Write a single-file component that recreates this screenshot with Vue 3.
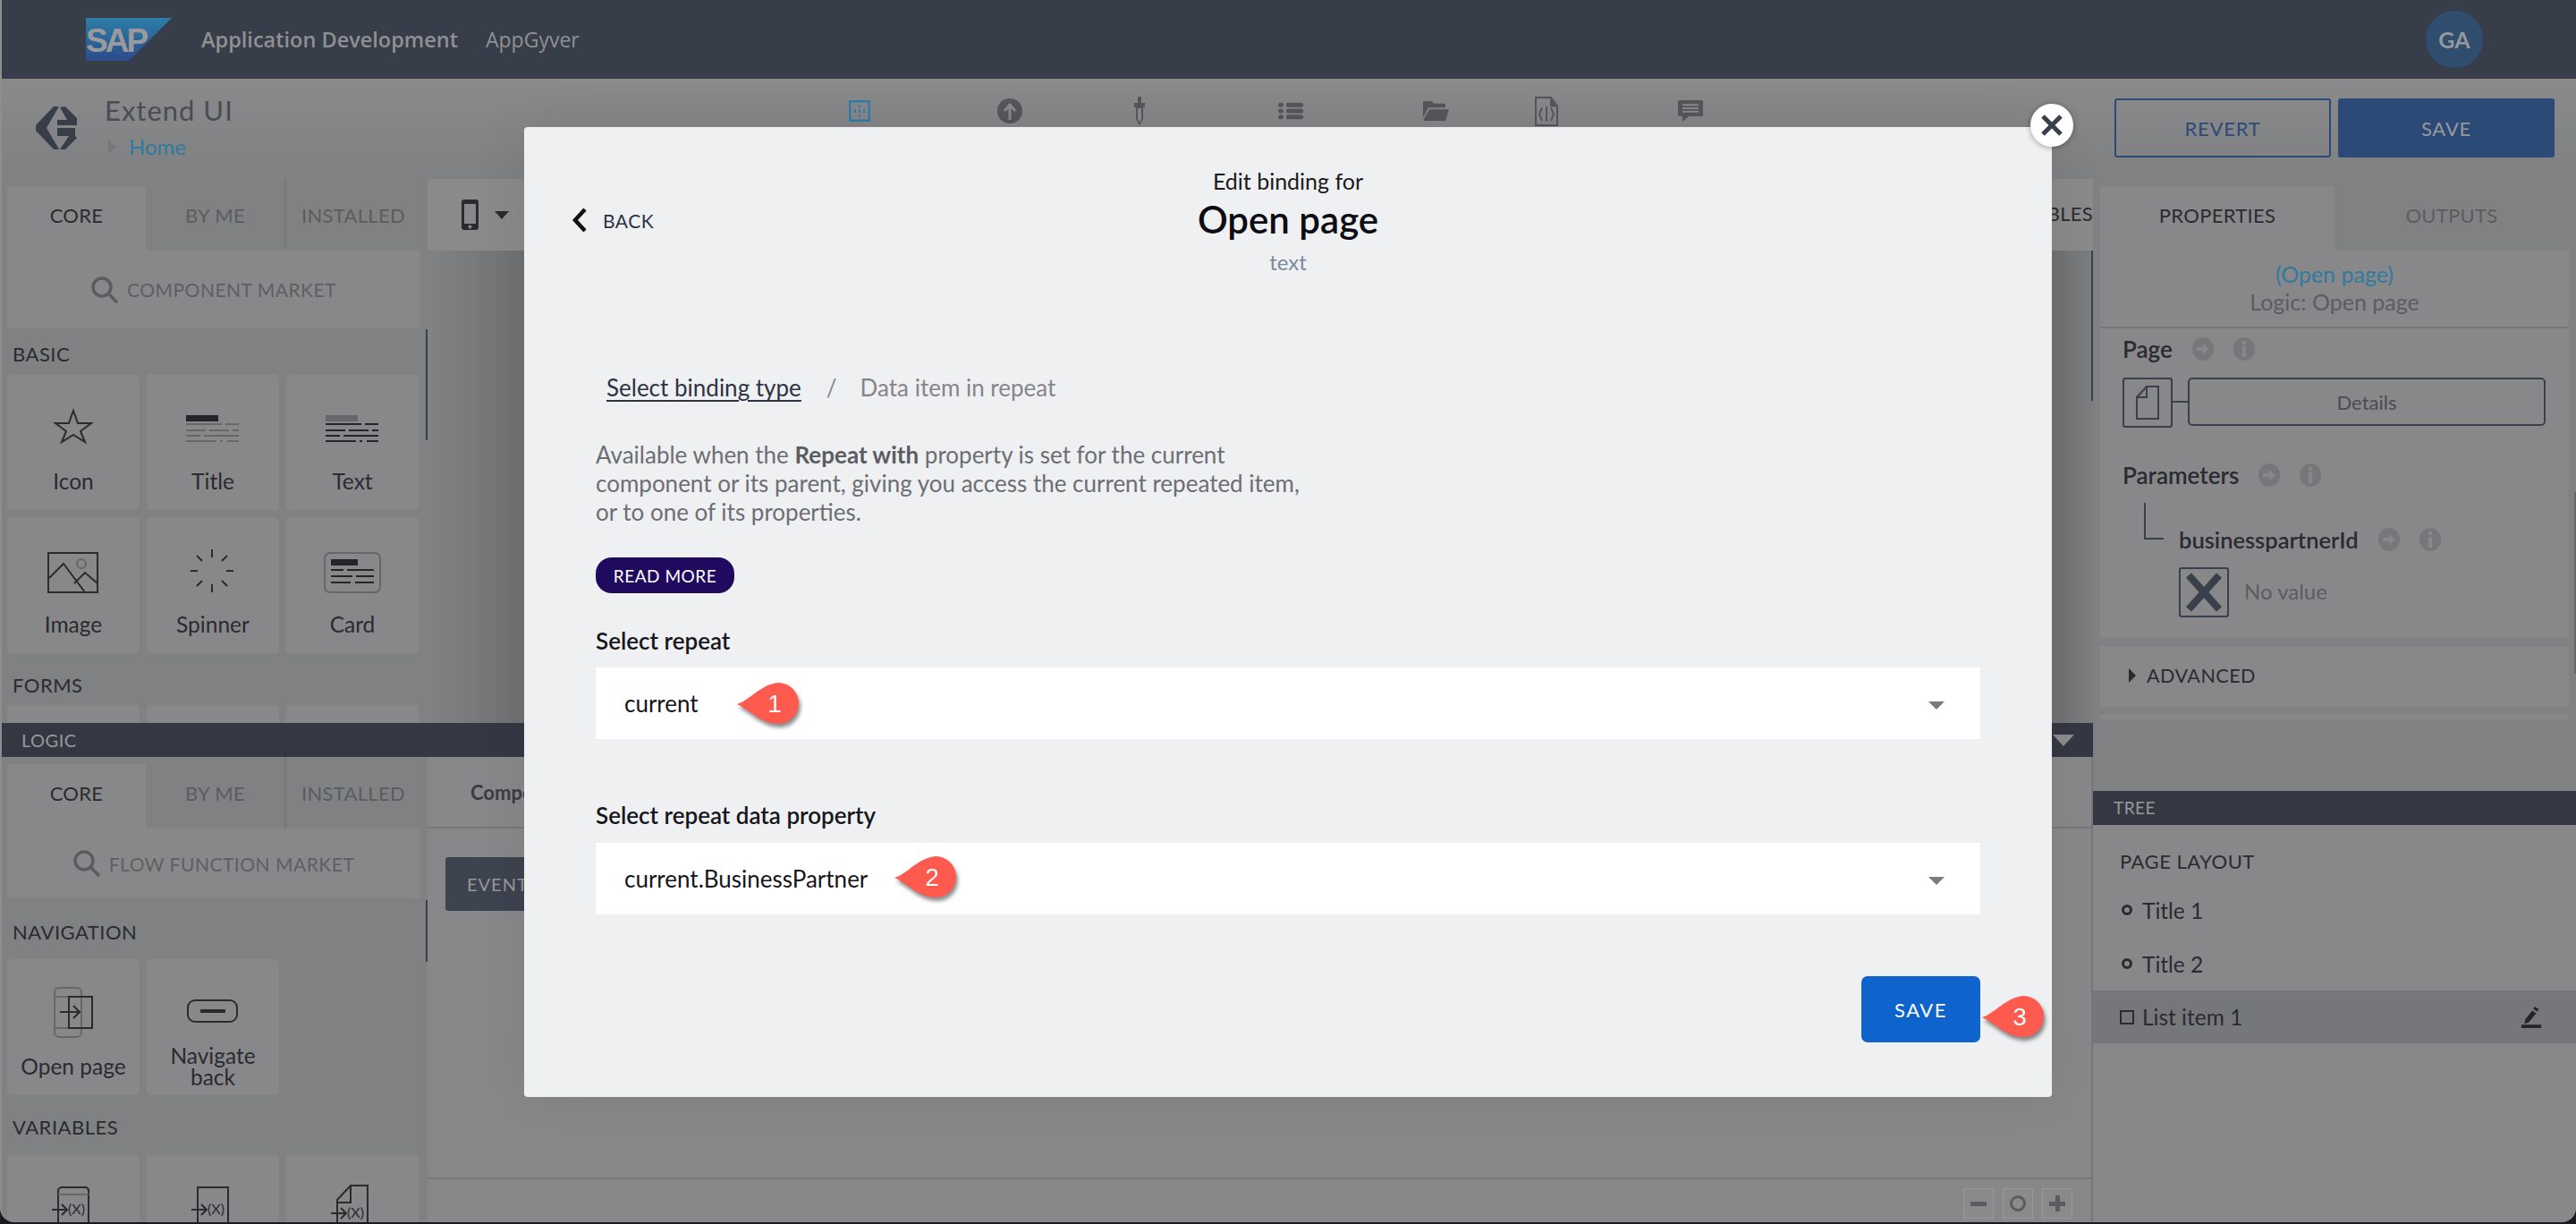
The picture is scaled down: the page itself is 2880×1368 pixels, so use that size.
<template>
  <div class="page">
    <div class="window">
      <header class="topbar">
        <svg class="sap" width="96" height="48" viewBox="0 0 96 48">
          <defs>
            <linearGradient id="sapfill" x1="0" y1="0" x2="0" y2="1">
              <stop offset="0" stop-color="#2c7ea6" />
              <stop offset="1" stop-color="#2b4c8c" />
            </linearGradient>
          </defs>
          <polygon points="0,0 96,0 48,48 0,48" fill="url(#sapfill)" />
          <text x="0" y="38" class="sap-text">SAP</text>
        </svg>
        <span class="top-title">Application Development</span>
        <span class="top-link">AppGyver</span>
        <div class="avatar">GA</div>
      </header>

      <div class="appbar">
        <svg class="logo" width="46" height="48" viewBox="0 0 46 48" fill="#383d4a">
          <path d="M20 0h6L12 24l14 24h-6L0 27v-6z" />
          <path d="M27 1l6-1 13 13v2H35zM24 15h22v6H24zM24 24h20v9H24zM46 35L33 48h-6l10-15h7z" />
        </svg>
        <div class="project">
          <div class="project-name">Extend UI</div>
          <div class="crumb"><i class="crumb-arrow"></i><span>Home</span></div>
        </div>
        <nav class="nav-icons">
          <svg width="24" height="24" viewBox="0 0 24 24"><rect x="1" y="1" width="22" height="22" fill="none" stroke="#2f7ea6" stroke-width="3" /><path d="M12 5v3M12 10v4M12 16v3M7 10v4M17 10v4" stroke="#2f7ea6" stroke-width="2" /></svg>
          <svg width="28" height="28" viewBox="0 0 28 28"><circle cx="14" cy="14" r="14" fill="#55565c" /><path d="M14 24V10M8 14l6-7 6 7" fill="none" stroke="#8a8a8b" stroke-width="3" /></svg>
          <svg width="16" height="32" viewBox="0 0 16 32"><path d="M6 0h4v7h4v5h-2v13l-4 7-4-7V12H2V7h4z" fill="#55565c" /><path d="M6 13h4v12l-2 4-2-4z" fill="#8a8a8b" /></svg>
          <svg width="28" height="20" viewBox="0 0 28 24" preserveAspectRatio="none" fill="#55565c"><circle cx="3" cy="4" r="3" /><circle cx="3" cy="12" r="3" /><circle cx="3" cy="20" r="3" /><rect x="9" y="1" width="19" height="6" rx="2" /><rect x="9" y="9" width="19" height="6" rx="2" /><rect x="9" y="17" width="19" height="6" rx="2" /></svg>
          <svg width="29" height="22" viewBox="0 0 29 24" preserveAspectRatio="none" fill="#55565c"><path d="M0 0h10l2 3h13v5H6L0 20z" /><path d="M7 10h22l-4 14H0z" /></svg>
          <svg width="28" height="33" viewBox="0 0 28 32" preserveAspectRatio="none" fill="none" stroke="#55565c" stroke-width="2"><path d="M2 1h17l7 9v21H2z" /><path d="M19 1v9h7" fill="#55565c" /><path d="M9 12l-3 7 3 7M19 12l3 7-3 7M14 11v16" /></svg>
          <svg width="28" height="24" viewBox="0 0 28 32" preserveAspectRatio="none"><path d="M2 0h24a2 2 0 0 1 2 2v20a2 2 0 0 1-2 2H12l-7 8v-8H2a2 2 0 0 1-2-2V2a2 2 0 0 1 2-2z" fill="#55565c" /><path d="M5 7h18M5 12h18M5 17h18" stroke="#8a8a8b" stroke-width="2.5" /></svg>
        </nav>
        <div class="app-actions">
          <button class="btn-outline">REVERT</button>
          <button class="btn-fill">SAVE</button>
        </div>
      </div>

      <div class="workspace">
        <div class="main">
          <aside class="palette palette-top">
            <div class="tabs">
              <div class="tab active">CORE</div>
              <div class="tab">BY ME</div>
              <div class="tab sep">INSTALLED</div>
            </div>
            <div class="market">
              <svg width="30" height="30" viewBox="0 0 30 30" fill="none" stroke="#5b5c62" stroke-width="3.500"><circle cx="12" cy="12" r="10" /><path d="M19 19l10 10" /></svg>
              <span>COMPONENT MARKET</span>
            </div>
            <div class="scroll-mark mark-a"></div>
            <div class="group-title first">BASIC</div>
            <div class="tiles">
              <div v-for="t in basic" :key="t.name" class="tile">
                <svg width="148" height="96" viewBox="0 0 148 96" v-html="t.icon"></svg>
                <div class="tile-label">{{ t.name }}</div>
              </div>
            </div>
            <div class="group-title forms">FORMS</div>
            <div class="tiles">
              <div class="tile"></div>
              <div class="tile"></div>
              <div class="tile"></div>
            </div>
          </aside>

          <div class="canvas">
            <div class="canvas-tools">
              <svg width="20" height="34" viewBox="0 0 20 34"><rect width="19" height="34" rx="3" fill="#2a2b30" /><rect x="3" y="5" width="13" height="22" fill="#88888a" /><circle cx="9.500" cy="30.500" r="2" fill="#88888a" /></svg>
              <i class="tool-caret"></i>
              <span class="tool-vars">VARIABLES</span>
            </div>
            <div class="canvas-stage"><i class="stage-scroll"></i></div>
          </div>

          <div class="logic-bar">
            <span>LOGIC</span>
            <i class="logic-caret"></i>
          </div>

          <aside class="palette palette-bottom">
            <div class="tabs">
              <div class="tab active">CORE</div>
              <div class="tab">BY ME</div>
              <div class="tab sep">INSTALLED</div>
            </div>
            <div class="market market-flow">
              <svg width="30" height="30" viewBox="0 0 30 30" fill="none" stroke="#5b5c62" stroke-width="3.500"><circle cx="12" cy="12" r="10" /><path d="M19 19l10 10" /></svg>
              <span>FLOW FUNCTION MARKET</span>
            </div>
            <div class="scroll-mark mark-b"></div>
            <div class="group-title nav-title">NAVIGATION</div>
            <div class="tiles">
              <div v-for="t in navigation" :key="t.name" class="tile">
                <svg width="148" height="96" viewBox="0 0 148 96" v-html="t.icon"></svg>
                <div class="tile-label">{{ t.name }}</div>
              </div>
            </div>
            <div class="group-title var-title">VARIABLES</div>
            <div class="tiles">
              <div v-for="(icon, i) in variables" :key="i" class="tile">
                <svg width="148" height="76" viewBox="0 0 148 76" v-html="icon"></svg>
              </div>
            </div>
          </aside>

          <div class="flow-area">
            <div class="flow-tabs"><b>Component</b></div>
            <div class="flow-canvas"><div class="event-btn">EVENTS</div></div>
            <div class="zoom-bar">
              <span class="zoom-btn"><i class="z-minus"></i></span>
              <span class="zoom-btn"><i class="z-ring"></i></span>
              <span class="zoom-btn"><i class="z-minus"></i><i class="z-plus"></i></span>
            </div>
          </div>
        </div>

        <aside class="side">
          <div class="side-top">
            <div class="tabs side-tabs">
              <div class="tab active">PROPERTIES</div>
              <div class="tab">OUTPUTS</div>
            </div>
            <div class="card summary">
              <a>(Open page)</a>
              <span>Logic: Open page</span>
            </div>
            <div class="card props">
              <div class="prop-head">Page<i class="hint arrow"></i><i class="hint info"></i></div>
              <div class="page-row">
                <div class="icon-box">
                  <svg width="26" height="38" viewBox="0 0 26 38" fill="none" stroke="#3a3f4c" stroke-width="2"><path d="M12 1h13v36H1V13z" /><path d="M12 1v12H1" /></svg>
                </div>
                <i class="link-line"></i>
                <div class="details">Details</div>
              </div>
              <div class="prop-head params">Parameters<i class="hint arrow"></i><i class="hint info"></i></div>
              <div class="param">
                <i class="tree-line"></i>
                <div class="param-body">
                  <div class="prop-head sub">businesspartnerId<i class="hint arrow"></i><i class="hint info"></i></div>
                  <div class="no-value">
                    <div class="icon-box x-box">
                      <svg width="40" height="44" viewBox="0 0 40 44" fill="none" stroke="#3a3f4c" stroke-width="8"><path d="M3 3l34 38M37 3L3 41" /></svg>
                    </div>
                    <span>No value</span>
                  </div>
                </div>
              </div>
            </div>
            <div class="card advanced"><i class="adv-arrow"></i>ADVANCED</div>
            <div class="card sliver"></div>
            <i class="side-scroll"></i>
          </div>
          <div class="tree-bar">TREE</div>
          <div class="tree">
            <div class="tree-title">PAGE LAYOUT</div>
            <div class="tree-item"><i class="dot"></i>Title 1</div>
            <div class="tree-item"><i class="dot"></i>Title 2</div>
            <div class="tree-item selected">
              <i class="square"></i>List item 1
              <svg class="pen" width="24" height="24" viewBox="0 0 24 26" fill="#24252a"><path d="M16 0l5 3-1.500 3-5-3zM13 5l5 3-9 11-5 2 .5-5zM0 22h24v4H0z" /></svg>
            </div>
          </div>
        </aside>
      </div>
    </div>

    <div class="modal">
      <button class="close">
        <svg width="24" height="24" viewBox="0 0 24 24" fill="none" stroke="#3a3f4c" stroke-width="5"><path d="M2 2l20 20M22 2L2 22" /></svg>
      </button>
      <header class="modal-head">
        <div class="back">
          <svg width="18" height="28" viewBox="0 0 18 28" fill="none" stroke="#111" stroke-width="4.500"><path d="M15 2L4 14l11 12" /></svg>
          <span>BACK</span>
        </div>
        <div class="heading">
          <div class="h-sub">Edit binding for</div>
          <div class="h-main">Open page</div>
          <div class="h-type">text</div>
        </div>
      </header>
      <div class="modal-body">
        <div class="steps">
          <a>Select binding type</a>
          <span class="slash">/</span>
          <span class="step-now">Data item in repeat</span>
        </div>
        <p class="desc">Available when the <b>Repeat with</b> property is set for the current<br />component or its parent, giving you access the current repeated item,<br />or to one of its properties.</p>
        <button class="read-more">READ MORE</button>
        <div class="field-label first-label">Select repeat</div>
        <div class="select">
          current
          <i class="select-caret"></i>
          <div class="marker m1">
            <svg width="70" height="50" viewBox="0 0 70 50"><path d="M0 24C14 20 26 2 46 0a23 23 0 0 1 0 46C26 46 14 30 0 24z" fill="#ff5a4e" /></svg>
            <span>1</span>
          </div>
        </div>
        <div class="field-label">Select repeat data property</div>
        <div class="select">
          current.BusinessPartner
          <i class="select-caret"></i>
          <div class="marker m2">
            <svg width="70" height="50" viewBox="0 0 70 50"><path d="M0 24C14 20 26 2 46 0a23 23 0 0 1 0 46C26 46 14 30 0 24z" fill="#ff5a4e" /></svg>
            <span>2</span>
          </div>
        </div>
        <div class="modal-foot"><button class="modal-save">SAVE</button></div>
      </div>
      <div class="marker m3">
        <svg width="70" height="50" viewBox="0 0 70 50"><path d="M0 24C14 20 26 2 46 0a23 23 0 0 1 0 46C26 46 14 30 0 24z" fill="#ff5a4e" /></svg>
        <span>3</span>
      </div>
    </div>
  </div>
</template>

<script setup>
const ink = 'stroke="#2a2b30" stroke-width="2" fill="none"'
const lines = (color) => `<path d="M44 56h40M88 56h15M44 63h22M70 63h22M96 63h7M44 69h16M64 69h39M44 75h34M82 75h3M90 75h13" stroke="${color}" stroke-width="2" />`

const basic = [
  { name: 'Icon', icon: `<polygon points="74,41 79,55 94,55 82,64 87,76 74,68 61,76 66,64 54,55 69,55" ${ink} />` },
  { name: 'Title', icon: `<rect x="44" y="46" width="36" height="7" fill="#24252a" />${lines('#66676b')}` },
  { name: 'Text', icon: `<rect x="44" y="46" width="36" height="7" fill="#66676b" />${lines('#24252a')}` },
  { name: 'Image', icon: `<rect x="46" y="40" width="55" height="44" ${ink} /><path d="M47 68l16-16 24 32M75 74l12-12 14 12" ${ink} /><circle cx="83" cy="52" r="5" fill="none" stroke="#66676b" stroke-width="2" />` },
  { name: 'Spinner', icon: `<path d="M73 36v9M73 75v9M49 60h8M89 60h8M56 43l6 6M84 71l6 6M90 43l-6 6M62 71l-6 6" ${ink} />` },
  { name: 'Card', icon: `<rect x="43" y="40" width="62" height="44" rx="6" fill="none" stroke="#66676b" stroke-width="2" /><rect x="50" y="47" width="30" height="7" fill="#24252a" /><path d="M50 59h14M68 59h30M50 66h24M78 66h20M50 73h22M77 73h21" stroke="#24252a" stroke-width="2" />` }
]

const navigation = [
  { name: 'Open page', icon: `<rect x="53" y="32" width="30" height="55" rx="5" fill="none" stroke="#66676b" stroke-width="2" /><path d="M53 42h15M53 77h15" stroke="#66676b" stroke-width="2" /><rect x="69" y="42" width="26" height="35" ${ink} /><path d="M59 59h21M74 52l7 7-7 7" ${ink} />` },
  { name: 'Navigate back', icon: `<rect x="46" y="46" width="55" height="24" rx="8" ${ink} /><path d="M60 58h28" stroke="#2a2b30" stroke-width="4" />` }
]

const varText = (y) => `<text x="68" y="${y}" font-family="Lato" font-size="16" fill="#2a2b30">(X)</text>`
const variables = [
  `<path d="M57 76V40a4 4 0 0 1 4-4h27a4 4 0 0 1 3 4v36" ${ink} /><path d="M57 44h34" stroke="#66676b" stroke-width="2" /><path d="M50 61h17M61 55l6 6-6 6" ${ink} />${varText(66)}`,
  `<path d="M57 76V36h34v40" ${ink} /><path d="M50 61h17M61 55l6 6-6 6" ${ink} />${varText(66)}`,
  `<path d="M57 76V50l15-16h19v42M72 34v19H57" ${ink} /><path d="M50 65h17M61 59l6 6-6 6" ${ink} />${varText(70)}`
]
</script>

<style>
html, body { margin: 0; background: #1c1a1e; }
</style>

<style scoped>
.page { position: relative; width: 2880px; height: 1368px; overflow: hidden; background: #1c1a1e; font-family: Lato, "Open Sans", sans-serif; color: #2a2b30; }
.window { width: 2880px; height: 1366px; box-sizing: border-box; border-left: 2px solid #8e8e8f; border-radius: 0 0 16px 16px; overflow: hidden; background: #808183; display: flex; flex-direction: column; }

.topbar { height: 88px; flex: none; background: #383d4a; display: flex; align-items: center; padding-left: 94px; padding-right: 104px; box-sizing: border-box; font-family: "Open Sans", sans-serif; color: #8f9092; }
.sap { flex: none; }
.sap-text { font-family: "Liberation Sans", sans-serif; font-weight: 700; font-size: 37px; letter-spacing: -3px; fill: #9a9a9c; }
.top-title { margin-left: 33px; font-size: 23.500px; font-weight: 600; }
.top-link { margin-left: 31px; font-size: 23px; }
.avatar { margin-left: auto; width: 64px; height: 64px; border-radius: 50%; background: #2f4d6f; color: #98989a; font: 700 25px Lato, sans-serif; display: flex; align-items: center; justify-content: center; }

.appbar { height: 112px; flex: none; position: relative; background: linear-gradient(#8a8a8b, #7f8082); display: flex; align-items: flex-start; }
.logo { margin: 31px 0 0 38px; }
.project { margin-left: 31px; padding-top: 16px; }
.project-name { font-size: 31px; line-height: 38px; color: #4a4c55; letter-spacing: 1px; }
.crumb { display: flex; align-items: center; font-size: 24px; line-height: 32px; color: #2f7aa0; margin-top: 6px; margin-left: 2px; }
.crumb-arrow { width: 0; height: 0; border: 8px solid transparent; border-left: 9px solid #76777c; border-right: 0; margin-right: 14px; margin-left: 2px; }
.nav-icons { position: absolute; left: 947px; top: 19px; height: 34px; display: flex; align-items: center; }
.nav-icons svg:nth-child(2) { margin-left: 142px; }
.nav-icons svg:nth-child(3) { margin-left: 123px; }
.nav-icons svg:nth-child(4) { margin-left: 147px; }
.nav-icons svg:nth-child(5) { margin-left: 134px; }
.nav-icons svg:nth-child(6) { margin-left: 95px; }
.nav-icons svg:nth-child(7) { margin-left: 133px; }
.app-actions { position: absolute; left: 2362px; top: 22px; display: flex; gap: 8px; }
.app-actions button { width: 242px; height: 66px; border-radius: 3px; font: 22px Lato, sans-serif; letter-spacing: .8px; box-sizing: border-box; }
.btn-outline { background: none; border: 2px solid #2c4a78; color: #2c4a78; }
.btn-fill { background: #2c4a78; border: 0; color: #98989a; }

.workspace { flex: 1; min-height: 0; display: flex; }
.main { width: 2338px; flex: none; display: grid; grid-template-columns: 476px 1fr; grid-template-rows: 608px 38px 1fr; }

.palette { position: relative; overflow: hidden; background: #808183; }
.palette-top { grid-column: 1; grid-row: 1; }
.palette-bottom { grid-column: 1; grid-row: 3; }
.tabs { height: 80px; display: flex; box-sizing: border-box; padding-left: 6px; }
.tab { flex: 0 0 155px; margin-top: 8px; font-size: 22px; color: #5b5c62; display: flex; align-items: center; justify-content: center; letter-spacing: .3px; padding-bottom: 8px; box-sizing: border-box; }
.tab.active { background: #88888a; border-radius: 4px 4px 0 0; color: #2a2b30; }
.tab.sep { flex: 0 0 158px; margin-top: 0; padding: 8px 6px 8px 0; border-left: 2px solid #76777a; }
.market { width: 462px; height: 87px; margin-left: 6px; background: #88888a; display: flex; align-items: center; justify-content: center; gap: 10px; font-size: 21px; color: #5e5f64; letter-spacing: .5px; }
.market-flow { height: 78px; }
.scroll-mark { position: absolute; right: 0; width: 2px; background: #3a3f4c; }
.mark-a { top: 168px; height: 124px; }
.mark-b { top: 160px; height: 69px; }
.group-title { font-size: 22px; line-height: 24px; padding-left: 12px; letter-spacing: .5px; }
.group-title.first { margin: 17px 0 10px; }
.group-title.forms { margin: 24px 0 10px; }
.group-title.nav-title { margin: 26px 0 18px; }
.group-title.var-title { margin: 24px 0 19px; }
.tiles { display: grid; grid-template-columns: repeat(3, 148px); column-gap: 8px; row-gap: 8px; padding-left: 6px; }
.tile { height: 152px; background: #88888a; border-radius: 4px; display: flex; flex-direction: column; }
.tile svg { flex: none; display: block; }
.tile-label { height: 48px; display: flex; align-items: center; justify-content: center; text-align: center; font-size: 24.500px; line-height: 24px; padding: 0 14px; }

.canvas { grid-column: 2; grid-row: 1; display: flex; flex-direction: column; }
.canvas-tools { height: 80px; flex: none; background: #8a8a8b; display: flex; align-items: center; padding: 0 0 0 38px; gap: 17px; box-sizing: border-box; }
.tool-caret { width: 0; height: 0; border: 8px solid transparent; border-top: 9px solid #2a2b30; border-bottom: 0; }
.tool-vars { margin-left: auto; margin-bottom: 4px; font-size: 22px; letter-spacing: .3px; }
.canvas-stage { position: relative; flex: 1; background: linear-gradient(90deg, #818284 0, #6f7072 108px, #6f7072 1816px, #7d7e80 1860px); }
.stage-scroll { position: absolute; right: 0; top: 0; width: 2px; height: 168px; background: #3a3f4c; }
.logic-bar { grid-column: 1 / 3; grid-row: 2; background: #353843; color: #98989a; display: flex; align-items: center; justify-content: space-between; padding: 0 21px 0 22px; font-size: 20px; letter-spacing: .5px; }
.logic-caret { width: 0; height: 0; border: 12px solid transparent; border-top: 13px solid #8c8c8e; border-bottom: 0; }
.flow-area { grid-column: 2; grid-row: 3; display: flex; flex-direction: column; background: #88888a; border-right: 2px solid #76777a; }
.flow-tabs { height: 80px; flex: none; box-sizing: border-box; border-bottom: 2px solid #76777a; padding: 26px 0 0 48px; font-size: 22px; color: #3a3b40; }
.flow-canvas { flex: 1; padding: 32px 0 0 20px; background: #88888a; }
.event-btn { width: 180px; height: 60px; border-radius: 3px; background: #3e4350; color: #98989a; font-size: 20px; letter-spacing: 1px; padding-left: 24px; box-sizing: border-box; line-height: 60px; }
.zoom-bar { height: 50px; flex: none; border-top: 2px solid #76777a; box-sizing: border-box; display: flex; justify-content: flex-end; gap: 10px; padding: 10px 21px 0 0; }
.zoom-btn { position: relative; width: 34px; height: 34px; box-sizing: border-box; border: 1px solid #98989a; background: #8a8a8b; }
.z-minus { position: absolute; left: 7px; top: 14px; width: 18px; height: 5px; background: #5b5c62; }
.z-plus { position: absolute; left: 14px; top: 7px; width: 5px; height: 18px; background: #5b5c62; }
.z-ring { position: absolute; left: 7px; top: 7px; width: 18px; height: 18px; box-sizing: border-box; border: 3px solid #5b5c62; border-radius: 50%; }

.side { flex: 1; display: flex; flex-direction: column; min-width: 0; }
.side-top { position: relative; height: 684px; flex: none; background: #808183; overflow: hidden; }
.side-tabs { padding-left: 8px; padding-right: 8px; background: #808183; }
.side-tabs .tab { flex: 0 0 262px; }
.side-tabs .tab:last-child { flex: 1; }
.card { margin: 0 8px 0 8px; background: #88888a; }
.summary { height: 87px; border-bottom: 2px solid #76777a; display: flex; flex-direction: column; align-items: center; padding-top: 11px; box-sizing: border-box; font-size: 25px; line-height: 31px; color: #5b5c62; }
.summary a { color: #2f7aa0; }
.props { height: 346px; padding: 7px 0 0 25px; box-sizing: border-box; }
.prop-head { display: flex; align-items: center; font-size: 26px; font-weight: 600; line-height: 32px; height: 32px; }
.hint { width: 24px; height: 26px; border-radius: 50%; background: #76777a; margin-left: 22px; position: relative; }
.hint.arrow::before { content: ""; position: absolute; left: 5px; top: 11px; width: 8px; height: 4px; background: #88888a; }
.hint.arrow::after { content: ""; position: absolute; left: 12px; top: 7px; border: 6px solid transparent; border-left: 7px solid #88888a; border-right: 0; }
.hint.info::before { content: ""; position: absolute; left: 10px; top: 4px; width: 4px; height: 4px; background: #88888a; }
.hint.info::after { content: ""; position: absolute; left: 10px; top: 10px; width: 4px; height: 12px; background: #88888a; }
.page-row { display: flex; align-items: flex-start; margin-top: 16px; }
.icon-box { width: 56px; height: 56px; box-sizing: border-box; border: 2px solid #3a3f4c; border-radius: 3px; display: flex; align-items: center; justify-content: center; }
.link-line { width: 17px; height: 2px; background: #3a3f4c; margin-top: 26px; }
.details { width: 400px; height: 54px; box-sizing: border-box; border: 2px solid #3a3f4c; border-radius: 5px; text-align: center; line-height: 52px; font-size: 22px; color: #4a4c55; }
.params { margin-top: 37px; }
.param { display: flex; margin-top: 15px; }
.tree-line { width: 22px; height: 41px; box-sizing: border-box; border-left: 2px solid #3a3f4c; border-bottom: 2px solid #3a3f4c; margin-left: 24px; flex: none; }
.param-body { margin-left: 17px; padding-top: 25px; }
.sub { font-size: 25.500px; }
.no-value { display: flex; align-items: center; gap: 17px; margin-top: 15px; font-size: 24px; color: #5b5c62; }
.no-value span { margin-bottom: 4px; }
.advanced { margin-top: 9px; height: 68px; display: flex; align-items: center; padding: 0 0 2px 32px; box-sizing: border-box; font-size: 21.500px; letter-spacing: .5px; }
.adv-arrow { width: 0; height: 0; border: 8px solid transparent; border-left: 8px solid #2a2b30; border-right: 0; margin-right: 12px; }
.sliver { height: 6px; margin-top: 8px; border-radius: 4px 4px 0 0; }
.side-scroll { position: absolute; right: 0; top: 350px; width: 2px; height: 203px; background: #66676b; }
.tree-bar { height: 38px; flex: none; background: #353843; color: #98989a; font-size: 19px; line-height: 38px; padding-left: 23px; letter-spacing: .5px; }
.tree { flex: 1; background: #88888a; padding-top: 27px; }
.tree-title { font-size: 22px; line-height: 28px; padding-left: 30px; letter-spacing: .5px; margin-bottom: 10px; }
.tree-item { position: relative; height: 60px; display: flex; align-items: center; font-size: 24.500px; padding-left: 30px; }
.tree-item.selected { background: #76777a; height: 59px; }
.dot { width: 12px; height: 12px; box-sizing: border-box; border: 3px solid #2a2b30; border-radius: 50%; margin: 0 11px 0 2px; }
.square { width: 16px; height: 16px; box-sizing: border-box; border: 2px solid #2a2b30; margin-right: 9px; }
.pen { position: absolute; right: 38px; top: 18px; }

.modal { position: absolute; left: 586px; top: 142px; width: 1708px; height: 1084px; background: #eff0f2; border-radius: 4px; box-shadow: 0 0 60px rgba(0, 0, 0, .08); }
.close { position: absolute; right: -24px; top: -26px; width: 48px; height: 48px; border-radius: 50%; border: 0; padding: 0; background: #fff; box-shadow: 0 1px 6px rgba(0, 0, 0, .35); display: flex; align-items: center; justify-content: center; }
.modal-head { display: grid; grid-template-columns: 1fr auto 1fr; padding-top: 46px; }
.back { display: flex; align-items: center; gap: 17px; padding-left: 53px; height: 28px; margin-top: 44px; font-size: 21px; letter-spacing: .5px; color: #2d3345; }
.heading { text-align: center; grid-column: 2; }
.h-sub { font-size: 25px; line-height: 30px; color: #1a1a20; margin-top: -1px; }
.h-main { font-size: 42px; line-height: 54px; font-weight: 600; color: #0c0c12; margin-top: 1px; }
.h-type { font-size: 24px; line-height: 42px; color: #7a88a0; }
.modal-body { padding: 103px 80px 0; }
.steps { display: flex; padding-left: 12px; font-size: 26px; line-height: 32px; color: #2d3345; }
.steps a { text-decoration: underline; text-underline-offset: 4px; }
.slash { margin: 0 26px 0 28px; color: #85858b; }
.step-now { color: #85858b; }
.desc { margin: 43px 0 0; font-size: 26px; line-height: 32px; color: #6d6e74; }
.desc b { font-weight: 700; color: #5b5c62; }
.read-more { display: block; margin-top: 35px; width: 155px; height: 40px; border: 0; padding: 0; border-radius: 18px; background: #200a60; color: #fff; font: 19px Lato, sans-serif; letter-spacing: .5px; }
.field-label { margin-top: 70px; font-size: 26px; line-height: 30px; font-weight: 600; color: #16161c; }
.first-label { margin-top: 38px; }
.select { position: relative; margin-top: 16px; height: 80px; background: #fff; box-sizing: border-box; padding-left: 32px; display: flex; align-items: center; font-size: 26px; color: #16161c; }
.first-label + .select { margin-top: 15px; }
.select-caret { position: absolute; right: 40px; top: 38px; width: 0; height: 0; border: 9px solid transparent; border-top: 9px solid #7a7b80; border-bottom: 0; }
.modal-foot { display: flex; justify-content: flex-end; margin-top: 69px; }
.modal-save { width: 133px; height: 74px; border: 0; border-radius: 7px; background: #0f63cc; color: #fff; font: 22px Lato, sans-serif; letter-spacing: 1.500px; }

.marker { position: absolute; width: 70px; height: 50px; filter: drop-shadow(2px 4px 2px rgba(0, 0, 0, .45)); }
.marker svg { display: block; }
.marker span { position: absolute; left: 24px; top: 0; width: 36px; height: 46px; text-align: center; color: #fff; font: 28px/47px "Liberation Sans", sans-serif; }
.m1 { left: 158px; top: 17px; }
.m2 { left: 334px; top: 15px; }
.m3 { left: 1630px; top: 971px; }
</style>
